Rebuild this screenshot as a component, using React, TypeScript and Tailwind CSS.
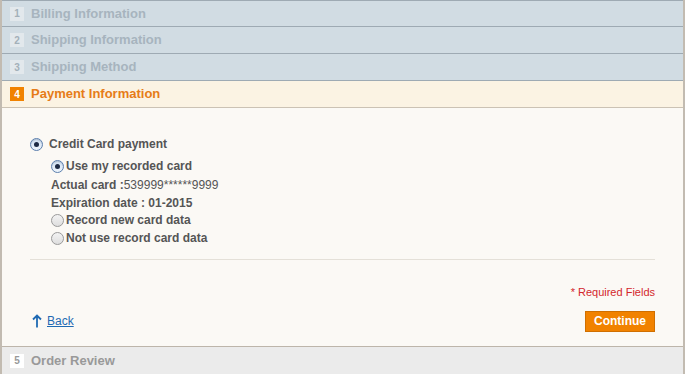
import React from 'react';

const font = { fontFamily: '"Liberation Sans", Arial, sans-serif' };

function StepHeader({ num, title, first }: { num: number; title: string; first?: boolean }) {
  return (
    <div
      className={`flex items-center gap-[7px] border-b border-[#9eaab3] bg-[#d1dce3] pl-[8px] ${
        first ? 'h-[27px] border-t' : 'h-[27px]'
      }`}
    >
      <span className="flex h-[14px] w-[14px] items-center justify-center bg-[#e2e8ec] text-[10px] font-bold text-[#a3b0b9]">
        {num}
      </span>
      <span className="text-[13px] font-bold text-[#a7b4be]">{title}</span>
    </div>
  );
}

function Radio({ checked }: { checked?: boolean }) {
  if (checked) {
    return (
      <span className="flex h-[13px] w-[13px] shrink-0 items-center justify-center rounded-full border border-[#5b7fae] bg-gradient-to-b from-[#cfe0f3] to-[#eef5fc] shadow-[inset_0_1px_1px_rgba(0,0,0,0.15)]">
        <span className="h-[5px] w-[5px] rounded-full bg-[#1c2a44]" />
      </span>
    );
  }
  return (
    <span className="h-[13px] w-[13px] shrink-0 rounded-full border border-[#9a9a9a] bg-gradient-to-b from-[#f3f3f3] to-[#dedede]" />
  );
}

export default function App() {
  return (
    <div className="h-[374px] w-[685px] overflow-hidden bg-white" style={font}>
      <div className="flex h-full flex-col border-x-2 border-[#c2bbb1]">
        <StepHeader num={1} title="Billing Information" first />
        <StepHeader num={2} title="Shipping Information" />
        <StepHeader num={3} title="Shipping Method" />

        {/* active step */}
        <div className="flex h-[27px] items-center gap-[7px] border-b border-[#cbc2b4] bg-[#fbf3e3] pl-[8px]">
          <span className="flex h-[14px] w-[14px] items-center justify-center bg-[#f18200] text-[10px] font-bold text-white">
            4
          </span>
          <span className="text-[13px] font-bold text-[#e67c18]">Payment Information</span>
        </div>

        <div className="flex flex-1 flex-col bg-[#fbf9f5] px-[28px] pt-[27px] text-[12px] font-bold text-[#555]">
          <label className="flex items-center gap-[6px]">
            <Radio checked />
            <span>Credit Card payment</span>
          </label>

          <div className="mt-[4px] flex flex-col pl-[21px]">
            <label className="flex h-[18px] items-center gap-[2px]">
              <Radio checked />
              <span>Use my recorded card</span>
            </label>
            <div className="flex h-[19px] items-center">
              Actual card :<span className="font-normal">539999******9999</span>
            </div>
            <div className="flex h-[17px] items-center">Expiration date : 01-2015</div>
            <label className="flex h-[18px] items-center gap-[2px]">
              <Radio />
              <span>Record new card data</span>
            </label>
            <label className="flex h-[18px] items-center gap-[2px]">
              <Radio />
              <span>Not use record card data</span>
            </label>
          </div>

          <div className="mt-[12px] border-t border-[#e4e0d8]" />

          <div className="mt-[24px] text-right text-[11px] font-normal text-[#d3262c]">* Required Fields</div>

          <div className="mt-[10px] flex items-center justify-between">
            <a href="#" className="flex items-center gap-[5px] pl-[2px] font-normal text-[#1f6ab3]">
              <svg width="10" height="14" viewBox="0 0 10 14" fill="none" stroke="#1f6ab3" strokeWidth="1.8">
                <path d="M5 13.5V1.5M1 5.5l4-4 4 4" />
              </svg>
              <span className="underline">Back</span>
            </a>
            <button className="h-[21px] w-[70px] border border-[#d06f00] bg-[#f18200] text-[12px] font-bold text-white">
              Continue
            </button>
          </div>
        </div>

        <div className="flex h-[28px] items-center gap-[7px] border-t border-[#bdb5aa] bg-[#ebebeb] pl-[8px]">
          <span className="flex h-[14px] w-[14px] items-center justify-center bg-white text-[10px] font-bold text-[#999]">
            5
          </span>
          <span className="text-[13px] font-bold text-[#999]">Order Review</span>
        </div>
      </div>
    </div>
  );
}
